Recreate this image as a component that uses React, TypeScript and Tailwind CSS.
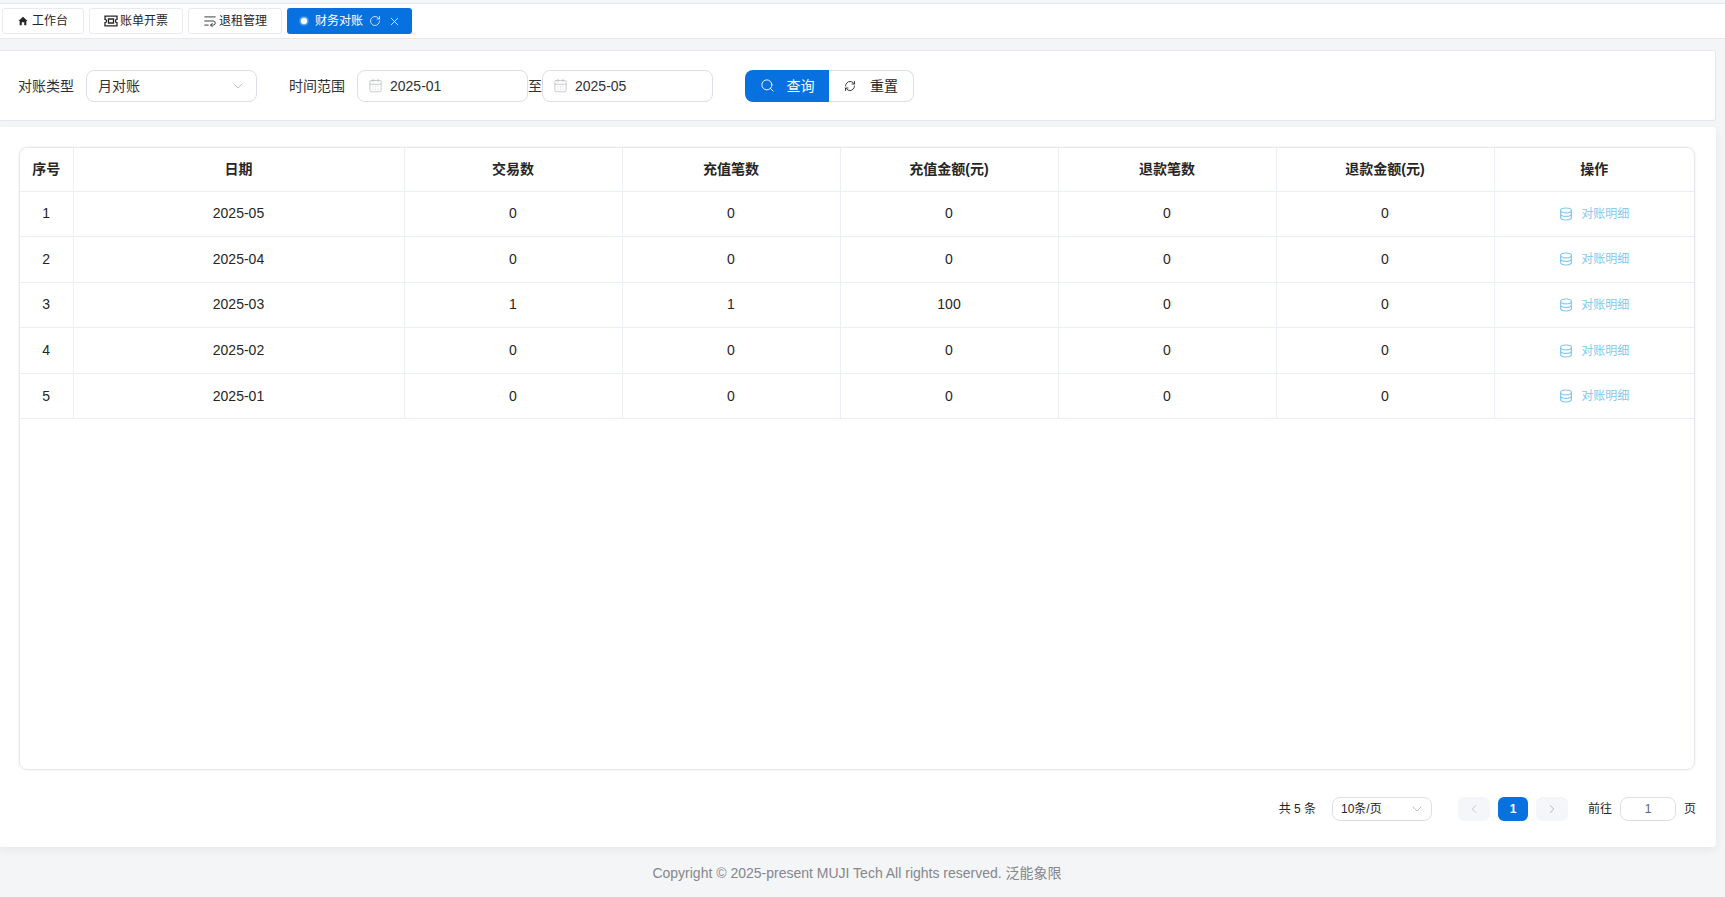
import { CalendarDays, ChevronDown, ChevronLeft, ChevronRight, RefreshCw, RotateCw, Search, WrapText, X } from "lucide-react";

const font = { fontFamily: '"Liberation Sans", "Noto Sans CJK SC", sans-serif' };

const rows = [
  { id: 1, date: "2025-05", trades: 0, recharge: 0, rechargeAmount: 0, refund: 0, refundAmount: 0 },
  { id: 2, date: "2025-04", trades: 0, recharge: 0, rechargeAmount: 0, refund: 0, refundAmount: 0 },
  { id: 3, date: "2025-03", trades: 1, recharge: 1, rechargeAmount: 100, refund: 0, refundAmount: 0 },
  { id: 4, date: "2025-02", trades: 0, recharge: 0, rechargeAmount: 0, refund: 0, refundAmount: 0 },
  { id: 5, date: "2025-01", trades: 0, recharge: 0, rechargeAmount: 0, refund: 0, refundAmount: 0 },
];

const columns = [
  { title: "序号", width: "w-[53px]" },
  { title: "日期", width: "w-[331px]" },
  { title: "交易数", width: "w-[218px]" },
  { title: "充值笔数", width: "w-[218px]" },
  { title: "充值金额(元)", width: "w-[218px]" },
  { title: "退款笔数", width: "w-[218px]" },
  { title: "退款金额(元)", width: "w-[218px]" },
  { title: "操作", width: "" },
];

const cell = "border-r border-[#ebeef5] pb-[1px]";

function DateInput({ value }: { value: string }) {
  return (
    <div className="flex h-8 w-[171px] items-center rounded-lg border border-[#dcdfe6] bg-white pl-[10px]">
      <CalendarDays className="h-[15px] w-[15px] text-[#b8bcc4]" strokeWidth={1.25} />
      <span className="ml-[7px] text-sm text-[#303133]">{value}</span>
    </div>
  );
}

function Tab({ icon, label, width }: { icon: React.ReactNode; label: string; width: string }) {
  return (
    <div className={`flex h-[26px] items-center justify-center gap-[2px] rounded-[3px] border border-[#e8eaef] bg-white text-xs text-[#262626] ${width}`}>
      {icon}
      {label}
    </div>
  );
}

function HomeGlyph() {
  return (
    <svg viewBox="0 0 12 12" className="mr-[2px] h-[10px] w-[10px] fill-[#262626]">
      <path d="M6 1 L11.5 6 L10 6 L10 11 L7.5 11 L7.5 7.5 L4.5 7.5 L4.5 11 L2 11 L2 6 L.5 6 Z" />
    </svg>
  );
}

function TicketGlyph() {
  return (
    <svg viewBox="0 0 14 12" className="h-[12px] w-[14px] fill-none stroke-[#262626]" strokeWidth="1.3">
      <path d="M1 1.2 H13 V4.4 A1.6 1.6 0 0 0 13 7.6 V10.8 H1 V7.6 A1.6 1.6 0 0 0 1 4.4 Z" />
      <path d="M4.5 4 H9.5 V8 H4.5 Z" />
    </svg>
  );
}

function DiscStack() {
  return (
    <svg viewBox="0 0 14 14" className="h-[14px] w-[14px] fill-none stroke-[#86c8ee]" strokeWidth="1.2">
      <ellipse cx="7" cy="3.4" rx="5.4" ry="2.4" />
      <path d="M1.6 3.4 V10.6 C1.6 11.9 4 13 7 13 C10 13 12.4 11.9 12.4 10.6 V3.4" />
      <path d="M1.6 7 C1.6 8.3 4 9.4 7 9.4 C10 9.4 12.4 8.3 12.4 7" />
    </svg>
  );
}

export default function App() {
  return (
    <div className="flex h-[897px] w-[1725px] flex-col overflow-hidden bg-[#f4f5f7]" style={font}>
      {/* Tabs */}
      <div className="mt-[3px] flex h-[36px] items-center gap-[5px] border-y border-[#e8e9ed] bg-white pl-[2px]">
        <Tab icon={<HomeGlyph />} label="工作台" width="w-[82px]" />
        <Tab icon={<TicketGlyph />} label="账单开票" width="w-[94px]" />
        <Tab icon={<WrapText className="h-[14px] w-[14px]" strokeWidth={1.5} />} label="退租管理" width="w-[94px]" />
        <div className="flex h-[26px] w-[125px] items-center rounded-[3px] bg-[#0871e0] pl-[14px] text-xs text-white">
          <span className="mr-[8px] h-[6px] w-[6px] rounded-full bg-white shadow-[0_0_2px_1px_rgba(255,255,255,0.6)]" />
          财务对账
          <RotateCw className="ml-[6px] h-[12px] w-[12px]" strokeWidth={1.5} />
          <X className="ml-[7px] h-[13px] w-[13px]" strokeWidth={1.5} />
        </div>
      </div>

      {/* Filter */}
      <div className="mt-[11px] mr-[9px] flex h-[71px] shrink-0 items-center rounded-r-[3px] border-y border-r border-[#e6e7ec] bg-white pl-[18px] text-sm text-[#303133]">
        <span>对账类型</span>
        <div className="ml-[12px] flex h-8 w-[171px] items-center justify-between rounded-lg border border-[#dcdfe6] pr-[10px] pl-[11px]">
          月对账
          <ChevronDown className="h-[16px] w-[16px] text-[#b0b3ba]" strokeWidth={1.25} />
        </div>
        <span className="ml-[32px]">时间范围</span>
        <div className="ml-[12px]">
          <DateInput value="2025-01" />
        </div>
        <span>至</span>
        <DateInput value="2025-05" />
        <div className="ml-[32px] flex h-8">
          <div className="flex w-[84px] items-center justify-center gap-[12px] rounded-l-lg bg-[#0871e0] text-white">
            <Search className="h-[15px] w-[15px]" strokeWidth={1.5} />
            查询
          </div>
          <div className="flex w-[85px] items-center justify-center gap-[14px] rounded-r-lg border-y border-r border-[#dcdfe6] text-[#262626]">
            <RefreshCw className="h-[12px] w-[12px]" strokeWidth={1.75} />
            重置
          </div>
        </div>
      </div>

      {/* Table card */}
      <div className="mt-[6px] mr-[9px] flex h-[720px] shrink-0 flex-col rounded-r-[4px] bg-white pt-[20px] pr-[20px] pl-[19px] shadow-[0_3px_10px_rgba(0,0,0,0.06)]">
        <div className="h-[623px] w-[1676px] overflow-hidden rounded-lg border border-[#e6e8ee] shadow-[0_0_3px_rgba(0,0,0,0.08)]">
          <table className="w-full table-fixed border-collapse text-sm text-[#262626]">
            <thead>
              <tr className="h-[43px] border-b border-[#ebeef5]">
                {columns.map((col) => (
                  <th key={col.title} className={`border-r border-[#ebeef5] font-bold last:border-r-0 ${col.width}`}>
                    {col.title}
                  </th>
                ))}
              </tr>
            </thead>
            <tbody>
              {rows.map((row) => (
                <tr key={row.id} className="h-[45.6px] border-b border-[#ebeef5] text-center">
                  <td className={cell}>{row.id}</td>
                  <td className={cell}>{row.date}</td>
                  <td className={cell}>{row.trades}</td>
                  <td className={cell}>{row.recharge}</td>
                  <td className={cell}>{row.rechargeAmount}</td>
                  <td className={cell}>{row.refund}</td>
                  <td className={cell}>{row.refundAmount}</td>
                  <td>
                    <div className="flex items-center justify-center gap-[8px] text-xs text-[#86c8ee]">
                      <DiscStack />
                      对账明细
                    </div>
                  </td>
                </tr>
              ))}
            </tbody>
          </table>
        </div>

        {/* Pagination */}
        <div className="mt-[27px] flex h-[24px] items-center justify-end text-xs text-[#262626]">
          <span>共 5 条</span>
          <div className="ml-[16px] flex h-[24px] w-[100px] items-center justify-between rounded-lg border border-[#dcdfe6] pr-[6px] pl-[8px]">
            10条/页
            <ChevronDown className="h-[16px] w-[16px] text-[#b0b3ba]" strokeWidth={1.25} />
          </div>
          <div className="ml-[26px] flex h-[24px] w-[32px] items-center justify-center rounded-md bg-[#f4f6fa] text-[#c0c4cc]">
            <ChevronLeft className="h-[14px] w-[14px]" strokeWidth={1.5} />
          </div>
          <div className="ml-[8px] flex h-[24px] w-[30px] items-center justify-center rounded-md bg-[#0871e0] font-bold text-white">1</div>
          <div className="ml-[8px] flex h-[24px] w-[32px] items-center justify-center rounded-md bg-[#f4f6fa] text-[#a8abb2]">
            <ChevronRight className="h-[14px] w-[14px]" strokeWidth={1.5} />
          </div>
          <span className="ml-[20px]">前往</span>
          <div className="ml-[8px] flex h-[24px] w-[56px] items-center justify-center rounded-lg border border-[#dcdfe6] text-[#606266]">1</div>
          <span className="ml-[8px]">页</span>
        </div>
      </div>

      {/* Footer */}
      <div className="mt-[16px] pr-[11px] text-center text-sm text-[#85878c]">Copyright © 2025-present MUJI Tech All rights reserved. 泛能象限</div>
    </div>
  );
}
